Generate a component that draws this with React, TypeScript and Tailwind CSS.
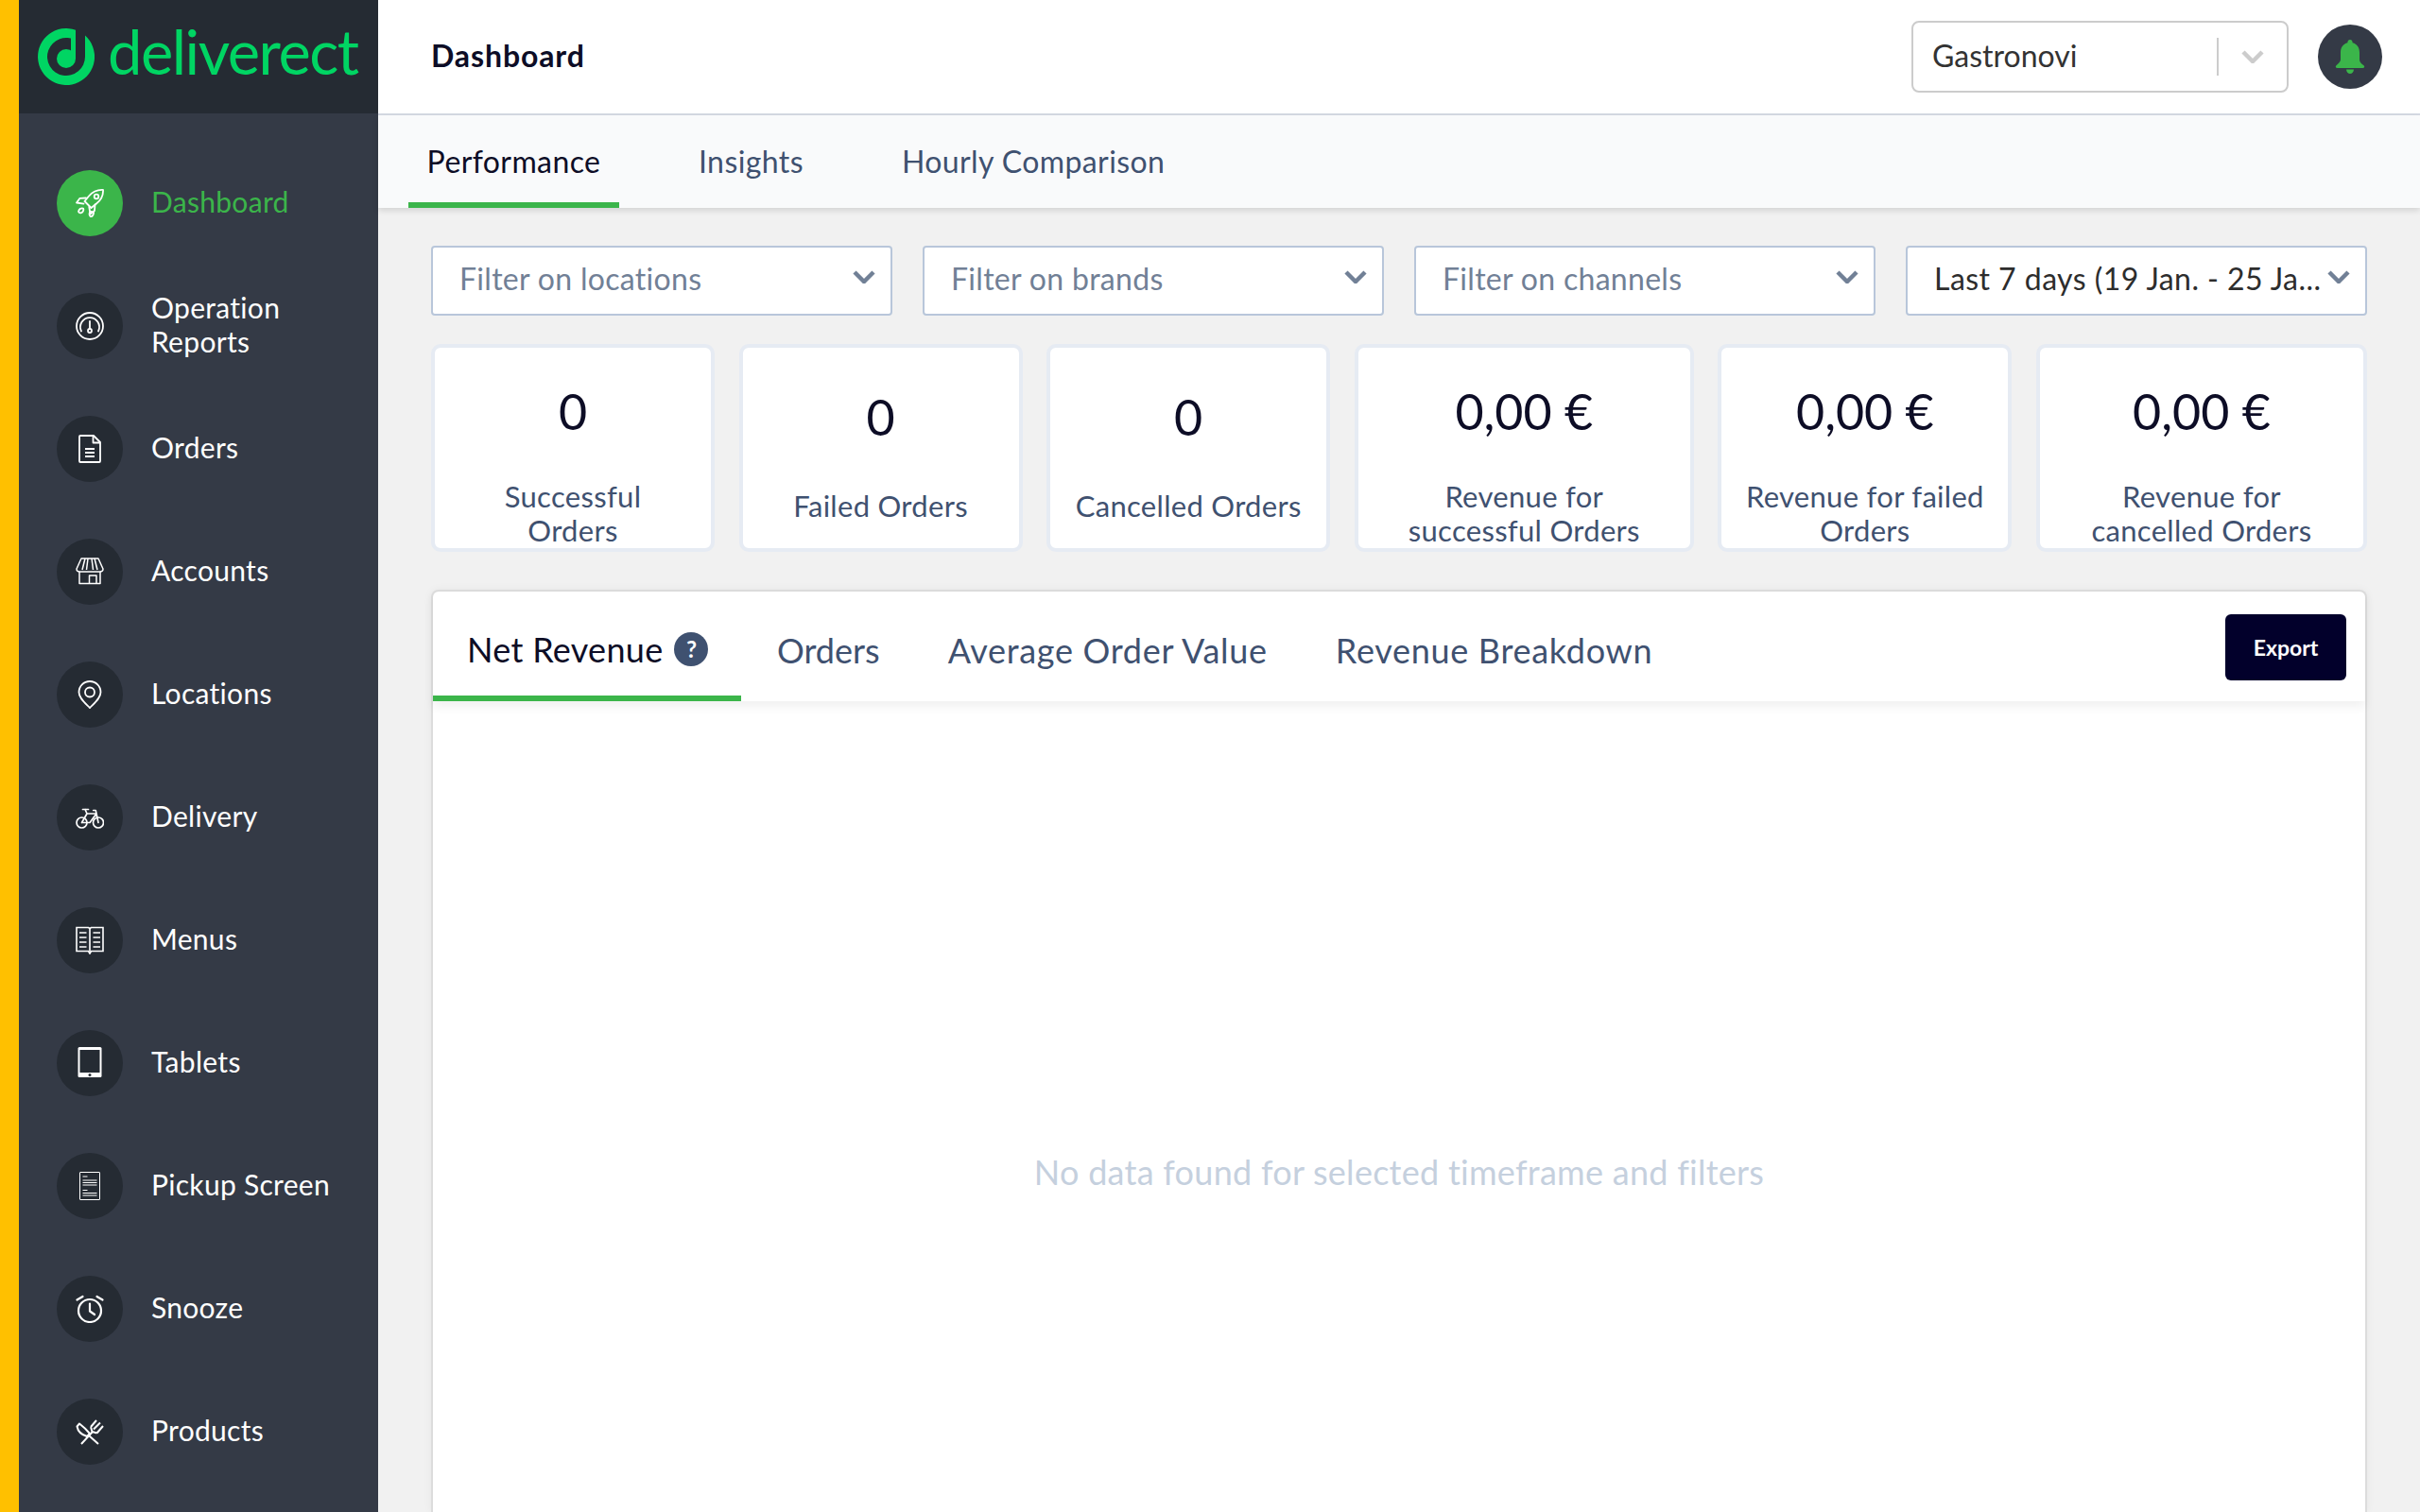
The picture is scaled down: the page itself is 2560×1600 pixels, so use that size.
import React from 'react';

const Rocket = () => (
  <svg viewBox="0 0 30 30" className="w-[30px] h-[30px]" fill="none" stroke="currentColor" strokeWidth="1.8" strokeLinejoin="round" strokeLinecap="round">
    <path d="M29 1C23 .6 18 3 14 7.5L9.500 13l7 7 5.500-4.500C27 11.500 29.400 7 29 1z" />
    <circle cx="22" cy="8" r="2.300" />
    <path d="M11 9.500L4.500 9.800 1 14.500l7.500 1.200M20.500 16.500L20 23l-4.500 3.500-1.200-7.500" />
    <path d="M3 24c.5-3 3-4.200 5-3.500 1 2-.5 4.300-2.500 4.800-1 .2-2-.2-2.500-1.300zM16 29.500c-2-2-2-4.500 0-5.500l3 .5c.4 2-1 4.500-3 5z" />
  </svg>
);

const Gauge = () => (
  <svg viewBox="0 0 30 30" className="w-[30px] h-[30px]" fill="none" stroke="currentColor" strokeWidth="1.8" strokeLinecap="round">
    <circle cx="15" cy="15" r="14" />
    <path d="M6 20.500A10 10 0 1 1 24 20.500" />
    <path d="M15 10v7" />
    <circle cx="15" cy="20" r="2" />
  </svg>
);

const Doc = () => (
  <svg viewBox="0 0 30 30" className="w-[30px] h-[30px]" fill="none" stroke="currentColor" strokeWidth="1.8" strokeLinejoin="round">
    <path d="M4 2a1 1 0 0 1 1-1h14l7 7v20a1 1 0 0 1-1 1H5a1 1 0 0 1-1-1z" />
    <path d="M18.500 1v7.500H26M10 15h10M10 19h10M10 23h10" />
  </svg>
);

const Store = () => (
  <svg viewBox="0 0 30 30" className="w-[30px] h-[30px]" fill="none" stroke="currentColor" strokeWidth="1.5" strokeLinejoin="round">
    <path d="M6 1h18l5 11c0 2.500-2.500 3-3.500 3h-21C3.500 15 1 14.500 1 12z" />
    <path d="M10 1l-3 12M13 1l-1.500 12M17 1l1.500 12M20 1l3 12" />
    <path d="M4 15v12.500h22V15" />
    <path d="M14.500 27.500V19h7.500v8.500" />
  </svg>
);

const Pin = () => (
  <svg viewBox="0 0 30 30" className="w-[30px] h-[30px]" fill="none" stroke="currentColor" strokeWidth="1.8" strokeLinejoin="round">
    <path d="M15 1C8.500 1 3.500 6 3.500 12.500 3.500 19 10 24 15 29c5-5 11.500-10 11.500-16.500C26.500 6 21.500 1 15 1z" />
    <circle cx="15" cy="12.500" r="5" />
  </svg>
);

const Bike = () => (
  <svg viewBox="0 0 30 30" className="w-[30px] h-[30px]" fill="none" stroke="currentColor" strokeWidth="1.7" strokeLinejoin="round" strokeLinecap="round">
    <circle cx="6.500" cy="20.500" r="5.500" />
    <circle cx="24" cy="20.500" r="5.500" />
    <path d="M6.500 20.500L12 11h10l2 9.500M22 11L15 20.500H6.500M12 11L10 6.500M7.500 6.500h6M22 11l-.8-3.500h-2.500" />
  </svg>
);

const Book = () => (
  <svg viewBox="0 0 30 30" className="w-[30px] h-[30px]" fill="none" stroke="currentColor" strokeWidth="1.6">
    <path d="M1 1.500h12.500l1.500 1 1.500-1H29v25H16.500L15 29l-1.500-2.500H1z" />
    <path d="M15 2.500V27M4 7h7.500M18.500 7H26M4 12h7.500M18.500 12H26M4 17h7.500M18.500 17H26M4 22h7.500M18.500 22H26" />
  </svg>
);

const Tablet = () => (
  <svg viewBox="0 0 30 34" className="w-[30px] h-[34px]">
    <rect x="2.500" y="0" width="25" height="32" rx="1.500" fill="currentColor" />
    <rect x="4.500" y="3" width="21" height="24" fill="#252b33" />
    <circle cx="15" cy="29.500" r="1.500" fill="#252b33" />
  </svg>
);

const Receipt = () => (
  <svg viewBox="0 0 30 30" className="w-[30px] h-[30px]" fill="none" stroke="currentColor">
    <rect x="4.500" y=".500" width="21" height="29" rx=".500" strokeWidth="1" />
    <path d="M7.500 5h5M7.500 9h15M7.500 11.500h15M7.500 14h15M7.500 19.500h5M7.500 22.500h15M7.500 25h15" strokeWidth="1.200" />
  </svg>
);

const Alarm = () => (
  <svg viewBox="0 0 30 30" className="w-[30px] h-[30px]" fill="none" stroke="currentColor" strokeWidth="2.200" strokeLinecap="round" strokeLinejoin="round">
    <circle cx="15" cy="17" r="12" />
    <path d="M15 9.500v8l5 3.500M1.500 5.500L7.500 2M28.500 5.500L22.500 2" />
  </svg>
);

const Cutlery = () => (
  <svg viewBox="0 0 30 30" className="w-[30px] h-[30px]" fill="none" stroke="currentColor" strokeWidth="2" strokeLinejoin="round">
    <path d="M1.500 9.500L4 6.500c4 3 8 7 11 10.500l-3 3C7 18.500 2.500 15 1.500 9.500z" />
    <path d="M14.500 19.500L24 28M6 28l12-13" />
    <path d="M16 10l1.500 5 5 1.500M16 10l6-7M19 12.500l7-7M22.500 16.500L29 9" />
  </svg>
);

const Bell = () => (
  <svg viewBox="0 0 32 36" className="w-[32px] h-[36px]" fill="#3bb54a">
    <path d="M16 0c1.500 0 2.600 1.200 2.600 2.700v.6C23.500 4.500 26 8.500 26 13.500v7.500c0 2.500 1.500 4 4.500 6.200 1.300 1 .7 2.800-1 2.800h-27c-1.700 0-2.300-1.800-1-2.800C3.500 25 6 23.500 6 21v-7.500c0-5 2.500-9 7.400-10.200v-.6C13.400 1.200 14.500 0 16 0z" />
    <path d="M12 31.500h8c0 2.500-2 4.500-4 4.500s-4-2-4-4.500z" />
  </svg>
);

const Chevron = ({ className }: { className: string }) => (
  <svg viewBox="0 0 24 14" className={className} fill="none" stroke="currentColor" strokeWidth="4.500">
    <path d="M2 2l10 10L22 2" />
  </svg>
);

const NAV_ITEMS = [
  { label: 'Dashboard', icon: <Rocket />, active: true },
  { label: 'Operation Reports', icon: <Gauge /> },
  { label: 'Orders', icon: <Doc /> },
  { label: 'Accounts', icon: <Store /> },
  { label: 'Locations', icon: <Pin /> },
  { label: 'Delivery', icon: <Bike /> },
  { label: 'Menus', icon: <Book /> },
  { label: 'Tablets', icon: <Tablet /> },
  { label: 'Pickup Screen', icon: <Receipt /> },
  { label: 'Snooze', icon: <Alarm /> },
  { label: 'Products', icon: <Cutlery /> },
];

const FILTERS = ['Filter on locations', 'Filter on brands', 'Filter on channels'];

const STATS = [
  { value: '0', label: 'Successful Orders', width: 'w-[300px]', top: 'pt-[31px]', gap: 'mt-[36px]', labelWidth: 'max-w-[240px]' },
  { value: '0', label: 'Failed Orders', width: 'w-[300px]', top: 'pt-[37px]', gap: 'mt-[40px]', labelWidth: 'max-w-[240px]' },
  { value: '0', label: 'Cancelled Orders', width: 'w-[300px]', top: 'pt-[37px]', gap: 'mt-[40px]', labelWidth: 'max-w-[260px]' },
  { value: '0,00 €', label: 'Revenue for successful Orders', width: 'w-[359px]', top: 'pt-[31px]', gap: 'mt-[36px]', labelWidth: 'max-w-[300px]' },
  { value: '0,00 €', label: 'Revenue for failed Orders', width: 'w-[311px]', top: 'pt-[31px]', gap: 'mt-[36px]', labelWidth: 'max-w-[270px]' },
  { value: '0,00 €', label: 'Revenue for cancelled Orders', width: 'w-[350px]', top: 'pt-[31px]', gap: 'mt-[36px]', labelWidth: 'max-w-[260px]' },
];

const Sidebar = () => (
  <aside className="w-[400px] shrink-0 border-l-[20px] border-[#ffc000] bg-[#343a46] flex flex-col">
    <div className="h-[120px] bg-[#252b33] flex items-center pl-[20px] gap-[14px]">
      <svg viewBox="0 0 60 60" className="w-[60px] h-[60px] shrink-0">
        <path d="M50 7.600A30 30 0 1 1 40 1.700V12.700A20 20 0 1 0 50 30C50 22 50 14 50 7.600z" fill="#00d563" />
        <circle cx="30" cy="32" r="10" fill="#00d563" />
        <path d="M35 5h5v27h-5z" fill="#00d563" />
      </svg>
      <span className="font-[Lato,sans-serif] font-normal text-[#00d563] text-[65px] leading-none tracking-[-1.500px] pb-[11px]">deliverect</span>
    </div>
    <nav className="flex flex-col gap-[60px] pt-[60px] pl-[40px] pr-[20px]">
      {NAV_ITEMS.map(item => (
        <div key={item.label} className="flex items-center h-[70px] gap-[30px]">
          <div className={`w-[70px] h-[70px] shrink-0 rounded-full flex items-center justify-center text-white ${item.active ? 'bg-[#3bb54a]' : 'bg-[#252b33]'}`}>
            {item.icon}
          </div>
          <span className={`text-[30px] leading-[36px] tracking-[0.3px] max-w-[190px] pb-[5px] ${item.active ? 'text-[#3bb54a]' : 'text-white'}`}>{item.label}</span>
        </div>
      ))}
    </nav>
  </aside>
);

const App: React.FC = () => {
  return (
    <div className="flex h-screen overflow-hidden bg-[#f1f1f1] font-[Lato,sans-serif]">
      <Sidebar />
      <main className="flex-1 flex flex-col min-w-0">
        <header className="h-[122px] shrink-0 bg-white border-b-[2px] border-[#d5dae3] flex items-center pl-[56px] pr-[40px]">
          <h1 className="text-[32px] font-bold tracking-[0.9px] text-[#0d0d26] pb-[3px]">Dashboard</h1>
          <div className="ml-auto w-[399px] h-[76px] border-[2px] border-[#cccccc] rounded-[8px] flex items-center pl-[20px] pr-[24px]">
            <span className="text-[32px] text-[#333333] pb-[3px]">Gastronovi</span>
            <div className="ml-auto w-[2px] h-[40px] bg-[#cccccc]" />
            <Chevron className="w-[24px] h-[14px] ml-[24px] text-[#cccccc]" />
          </div>
          <div className="ml-[31px] w-[68px] h-[68px] rounded-full bg-[#343a46] flex items-center justify-center">
            <Bell />
          </div>
        </header>

        <div className="h-[98px] shrink-0 bg-[#f9fafb] shadow-[0_3px_6px_rgba(0,0,0,0.12)] flex pl-[32px] gap-[64px] relative text-[32px] tracking-[0.4px]">
          <div className="h-full w-[223px] border-b-[6px] border-[#3bb54a] pt-[6px] flex items-center justify-center text-[#0d0d26]">Performance</div>
          <div className="h-full px-[20px] flex items-center text-[#3f5170]">Insights</div>
          <div className="h-full px-[20px] flex items-center text-[#3f5170]">Hourly Comparison</div>
        </div>

        <div className="flex-1 min-h-0 flex flex-col pl-[56px] pr-[56px] pt-[40px]">
          <div className="flex gap-[32px]">
            {FILTERS.map(name => (
              <div key={name} className="flex-1 h-[74px] bg-white border-[2px] border-[#b8c6da] rounded-[4px] flex items-center pl-[28px] pr-[16px]">
                <span className="text-[32px] tracking-[0.3px] text-[#718096] pb-[4px]">{name}</span>
                <Chevron className="w-[24px] h-[14px] ml-auto mb-[8px] text-[#718096]" />
              </div>
            ))}
            <div className="flex-1 min-w-0 h-[74px] bg-white border-[2px] border-[#b8c6da] rounded-[4px] flex items-center pl-[28px] pr-[16px]">
              <span className="text-[32px] tracking-[0.45px] text-[#2d2d2d] whitespace-nowrap pb-[4px]">Last 7 days (19 Jan. - 25 Ja...</span>
              <Chevron className="w-[24px] h-[14px] ml-auto shrink-0 mb-[8px] text-[#718096]" />
            </div>
          </div>

          <div className="flex justify-between mt-[30px]">
            {STATS.map(stat => (
              <div key={stat.label} className={`${stat.width} h-[220px] bg-white border-[4px] border-[#e6ebf3] rounded-[10px] flex flex-col items-center text-center ${stat.top}`}>
                <div className="text-[52px] leading-[72px] text-[#0d0d26]">{stat.value}</div>
                <div className={`text-[31px] leading-[36px] tracking-[0.3px] text-[#3f5170] ${stat.gap} ${stat.labelWidth}`}>{stat.label}</div>
              </div>
            ))}
          </div>

          <section className="mt-[40px] flex-1 min-h-0 bg-white border-[2px] border-b-0 border-[#dcdcdc] rounded-t-[8px] flex flex-col shadow-[0_0_10px_rgba(0,0,0,0.05)]">
            <div className="h-[116px] shrink-0 flex items-stretch shadow-[0_6px_10px_rgba(0,0,0,0.06)] pr-[20px]">
              <div className="w-[326px] border-b-[6px] border-[#3bb54a] flex items-center pl-[36px] gap-[12px] pt-[12px]">
                <span className="text-[36px] tracking-[0.3px] text-[#0d0d26]">Net Revenue</span>
                <span className="w-[36px] h-[36px] rounded-full bg-[#3f5170] text-white text-[24px] font-bold flex items-center justify-center">?</span>
              </div>
              <div className="flex items-center text-[36px] text-[#3f5170] ml-[38px] gap-[72px] pt-[8px]">
                <span>Orders</span>
                <span className="tracking-[0.7px]">Average Order Value</span>
                <span className="tracking-[0.7px]">Revenue Breakdown</span>
              </div>
              <button className="ml-auto self-start mt-[24px] w-[128px] h-[70px] rounded-[6px] bg-[#02002b] text-white text-[23px] font-bold">Export</button>
            </div>
            <div className="flex-1 flex items-start justify-center pt-[476px] text-[36px] leading-[44px] tracking-[0.27px] text-[#c5d0de]">
              No data found for selected timeframe and filters
            </div>
          </section>
        </div>
      </main>
    </div>
  );
};

export default App;
